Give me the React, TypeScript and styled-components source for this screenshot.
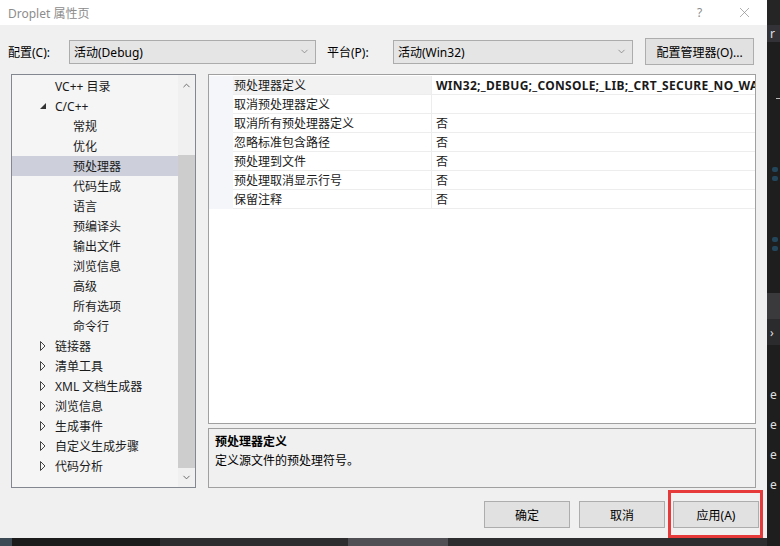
import React from "react";
import styled, { createGlobalStyle } from "styled-components";
import { ChevronDown, ChevronUp, X } from "lucide-react";

const GlobalStyle = createGlobalStyle`
  body {
    margin: 0;
    background: #1e1e1e;
    font-family: "Noto Sans", "Noto Sans CJK SC", sans-serif;
    font-size: 12px;
    color: #000;
  }
`;

const Shell = styled.div`
  display: grid;
  grid-template-columns: 767px 13px;
  grid-template-rows: 538px 8px;
  width: 780px;
  height: 546px;
  overflow: hidden;
`;

const Dialog = styled.div`
  grid-column: 1;
  grid-row: 1;
  display: flex;
  flex-direction: column;
  background: #f0f0f0;
`;

const TitleBar = styled.div`
  height: 25px;
  display: flex;
  align-items: center;
  background: #fff;
  padding-left: 8px;
`;

const Title = styled.span`
  color: #8c8c8c;
  font-size: 12px;
`;

const TitleButtons = styled.div`
  margin-left: auto;
  display: flex;
  height: 100%;
`;

const TitleButton = styled.div`
  width: 45px;
  display: flex;
  align-items: center;
  justify-content: center;
  color: #8c8c8c;
  font-size: 12px;
`;

const ConfigRow = styled.div`
  margin-top: 13px;
  height: 27px;
  display: flex;
  align-items: center;
  padding: 0 13px 0 8px;
`;

const FieldLabel = styled.span<{ $w: number; $ml?: number }>`
  width: ${({ $w }) => $w}px;
  margin-left: ${({ $ml = 0 }) => $ml}px;
  flex-shrink: 0;
`;

const Combo = styled.div<{ $w: number }>`
  width: ${({ $w }) => $w}px;
  height: 24px;
  box-sizing: border-box;
  display: flex;
  align-items: center;
  padding: 0 5px 0 4px;
  background: #e5e5e5;
  border: 1px solid #acacac;
  color: #000;
  & > span {
    flex: 1;
  }
  & > svg {
    color: #707070;
  }
`;

const PushButton = styled.div<{ $w: number }>`
  width: ${({ $w }) => $w}px;
  height: 27px;
  box-sizing: border-box;
  display: flex;
  align-items: center;
  justify-content: center;
  background: #e1e1e1;
  border: 1px solid #adadad;
  flex-shrink: 0;
`;

const ManagerButton = styled(PushButton)`
  margin-left: 12px;
`;

const Main = styled.div`
  margin-top: 9px;
  height: 414px;
  display: flex;
  gap: 12px;
  padding: 0 11px;
`;

const Tree = styled.div`
  width: 185px;
  box-sizing: border-box;
  border: 1px solid #828790;
  background: #f5f5f5;
  display: flex;
`;

const TreeList = styled.div`
  flex: 1;
  padding-top: 1px;
  display: flex;
  flex-direction: column;
`;

const TreeRow = styled.div<{ $level: number; $selected?: boolean }>`
  height: 20px;
  display: flex;
  align-items: center;
  padding-left: ${({ $level }) => ($level === 0 ? 26 : 61)}px;
  background: ${({ $selected }) => ($selected ? "#cdd0da" : "transparent")};
  color: #1a1a1a;
  white-space: nowrap;
`;

const Twisty = styled.span`
  width: 17px;
  display: flex;
  align-items: center;
  padding-left: 2px;
  box-sizing: border-box;
`;

const ScrollBar = styled.div`
  width: 17px;
  background: #f0f0f0;
  display: flex;
  flex-direction: column;
`;

const ScrollArrow = styled.div<{ $h: number }>`
  height: ${({ $h }) => $h}px;
  display: flex;
  align-items: center;
  justify-content: center;
  color: #606060;
`;

const Thumb = styled.div<{ $top: number; $h: number }>`
  margin-top: ${({ $top }) => $top}px;
  height: ${({ $h }) => $h}px;
  background: #cdcdcd;
`;

const Track = styled.div`
  flex: 1;
`;

const RightColumn = styled.div`
  flex: 1;
  display: flex;
  flex-direction: column;
`;

const Grid = styled.div`
  height: 351px;
  box-sizing: border-box;
  border: 1px solid #a0a0a0;
  background: #fff;
  padding-top: 1px;
  overflow: hidden;
`;

const GridRow = styled.div`
  display: grid;
  grid-template-columns: 24px 199px 1fr;
  height: 19px;
`;

const Gutter = styled.div`
  background: #f4f6f9;
`;

const Cell = styled.div<{ $bold?: boolean; $selected?: boolean; $divider?: boolean }>`
  display: flex;
  align-items: center;
  padding-left: ${({ $divider }) => ($divider ? 1 : 4)}px;
  border-bottom: 1px solid #ededed;
  border-right: ${({ $divider }) => ($divider ? "1px solid #ededed" : "none")};
  background: ${({ $selected }) => ($selected ? "#f2f2f2" : "transparent")};
  font-weight: ${({ $bold }) => ($bold ? 700 : 400)};
  letter-spacing: ${({ $bold }) => ($bold ? "0.27px" : "normal")};
  white-space: nowrap;
  overflow: hidden;
  color: #1a1a1a;
`;

const Description = styled.div`
  margin-top: 4px;
  height: 60px;
  box-sizing: border-box;
  border: 1px solid #a0a0a0;
  background: #f0f0f0;
  padding: 3px 6px;
  display: flex;
  flex-direction: column;
  line-height: 19px;
`;

const DescTitle = styled.div`
  font-weight: 700;
`;

const ButtonRow = styled.div`
  margin-top: 13px;
  height: 27px;
  display: flex;
  justify-content: flex-end;
  padding-right: 8px;
  gap: 9px;
`;

const Highlight = styled.div`
  position: relative;
  margin-left: -1px;
  &::after {
    content: "";
    position: absolute;
    left: -5px;
    right: -4px;
    top: -11px;
    bottom: -10px;
    border: 3px solid #e5393a;
    pointer-events: none;
  }
`;

const RightStrip = styled.div`
  grid-column: 2;
  grid-row: 1 / 3;
  background: #1e1e1e;
  display: flex;
  flex-direction: column;
  color: #e0e0e0;
`;

const StripBlock = styled.div<{ $h: number; $bg: string }>`
  height: ${({ $h }) => $h}px;
  background: ${({ $bg }) => $bg};
  display: flex;
  align-items: center;
  padding-left: 3px;
  font-size: 12px;
  flex-shrink: 0;
`;

const StripLine = styled.div`
  margin-left: 9px;
  height: 1px;
  background: #bbb;
  flex-shrink: 0;
`;

const DimMark = styled.div`
  margin: 2px 0 2px 5px;
  width: 6px;
  height: 5px;
  border-radius: 2px;
  background: #23465a;
  flex-shrink: 0;
`;

const BottomStrip = styled.div`
  grid-column: 1;
  grid-row: 2;
  display: flex;
  background: #1b1b1c;
`;

const BottomSeg = styled.div<{ $w: number; $bg: string }>`
  width: ${({ $w }) => $w}px;
  background: ${({ $bg }) => $bg};
  flex-shrink: 0;
`;

const ExpandedIcon = () => (
  <svg width="6" height="6" viewBox="0 0 6 6">
    <polygon points="6,0 6,6 0,6" fill="#333" />
  </svg>
);

const CollapsedIcon = () => (
  <svg width="6" height="10" viewBox="0 0 6 10">
    <polygon points="0.5,0.5 5,5 0.5,9.5" fill="none" stroke="#444" strokeWidth="1" />
  </svg>
);

type TreeItem = { label: string; level: number; twisty?: "open" | "closed"; selected?: boolean };

const treeItems: TreeItem[] = [
  { label: "VC++ 目录", level: 0 },
  { label: "C/C++", level: 0, twisty: "open" },
  { label: "常规", level: 1 },
  { label: "优化", level: 1 },
  { label: "预处理器", level: 1, selected: true },
  { label: "代码生成", level: 1 },
  { label: "语言", level: 1 },
  { label: "预编译头", level: 1 },
  { label: "输出文件", level: 1 },
  { label: "浏览信息", level: 1 },
  { label: "高级", level: 1 },
  { label: "所有选项", level: 1 },
  { label: "命令行", level: 1 },
  { label: "链接器", level: 0, twisty: "closed" },
  { label: "清单工具", level: 0, twisty: "closed" },
  { label: "XML 文档生成器", level: 0, twisty: "closed" },
  { label: "浏览信息", level: 0, twisty: "closed" },
  { label: "生成事件", level: 0, twisty: "closed" },
  { label: "自定义生成步骤", level: 0, twisty: "closed" },
  { label: "代码分析", level: 0, twisty: "closed" },
];

const props: { name: string; value: string; bold?: boolean; selected?: boolean }[] = [
  {
    name: "预处理器定义",
    value: "WIN32;_DEBUG;_CONSOLE;_LIB;_CRT_SECURE_NO_WA",
    bold: true,
    selected: true,
  },
  { name: "取消预处理器定义", value: "" },
  { name: "取消所有预处理器定义", value: "否" },
  { name: "忽略标准包含路径", value: "否" },
  { name: "预处理到文件", value: "否" },
  { name: "预处理取消显示行号", value: "否" },
  { name: "保留注释", value: "否" },
];

export default function App() {
  return (
    <Shell>
      <GlobalStyle />
      <Dialog>
        <TitleBar>
          <Title>Droplet 属性页</Title>
          <TitleButtons>
            <TitleButton>?</TitleButton>
            <TitleButton>
              <X size={17} strokeWidth={1} />
            </TitleButton>
          </TitleButtons>
        </TitleBar>

        <ConfigRow>
          <FieldLabel $w={61}>配置(C):</FieldLabel>
          <Combo $w={247}>
            <span>活动(Debug)</span>
            <ChevronDown size={11} strokeWidth={1.5} />
          </Combo>
          <FieldLabel $w={66} $ml={11}>
            平台(P):
          </FieldLabel>
          <Combo $w={240}>
            <span>活动(Win32)</span>
            <ChevronDown size={11} strokeWidth={1.5} />
          </Combo>
          <ManagerButton $w={109}>配置管理器(O)...</ManagerButton>
        </ConfigRow>

        <Main>
          <Tree>
            <TreeList>
              {treeItems.map((item, i) => (
                <TreeRow key={i} $level={item.level} $selected={item.selected}>
                  {item.level === 0 && (
                    <Twisty>
                      {item.twisty === "open" && <ExpandedIcon />}
                      {item.twisty === "closed" && <CollapsedIcon />}
                    </Twisty>
                  )}
                  {item.label}
                </TreeRow>
              ))}
            </TreeList>
            <ScrollBar>
              <ScrollArrow $h={20}>
                <ChevronUp size={11} strokeWidth={2} />
              </ScrollArrow>
              <Thumb $top={60} $h={313} />
              <Track />
              <ScrollArrow $h={19}>
                <ChevronDown size={11} strokeWidth={2} />
              </ScrollArrow>
            </ScrollBar>
          </Tree>

          <RightColumn>
            <Grid>
              {props.map((p, i) => (
                <GridRow key={i}>
                  <Gutter />
                  <Cell $divider $selected={p.selected}>
                    {p.name}
                  </Cell>
                  <Cell $bold={p.bold}>{p.value}</Cell>
                </GridRow>
              ))}
            </Grid>
            <Description>
              <DescTitle>预处理器定义</DescTitle>
              <div>定义源文件的预处理符号。</div>
            </Description>
          </RightColumn>
        </Main>

        <ButtonRow>
          <PushButton $w={86}>确定</PushButton>
          <PushButton $w={86}>取消</PushButton>
          <Highlight>
            <PushButton $w={86}>应用(A)</PushButton>
          </Highlight>
        </ButtonRow>
      </Dialog>

      <RightStrip>
        <StripBlock $h={25} $bg="#252526" />
        <StripBlock $h={17} $bg="#333337">
          r
        </StripBlock>
        <StripBlock $h={56} $bg="#1e1e1e" />
        <StripLine />
        <StripBlock $h={66} $bg="#1e1e1e" />
        <DimMark />
        <DimMark />
        <StripBlock $h={52} $bg="#1e1e1e" />
        <DimMark />
        <DimMark />
        <StripBlock $h={40} $bg="#1e1e1e" />
        <StripBlock $h={26} $bg="#3a3a3d" />
        <StripBlock $h={26} $bg="#2b2b2e">
          ›
        </StripBlock>
        <StripBlock $h={34} $bg="#1e1e1e" />
        <StripBlock $h={30} $bg="#1e1e1e">e</StripBlock>
        <StripBlock $h={30} $bg="#1e1e1e">e</StripBlock>
        <StripBlock $h={30} $bg="#1e1e1e">e</StripBlock>
        <StripBlock $h={30} $bg="#1e1e1e">e</StripBlock>
      </RightStrip>

      <BottomStrip>
        <BottomSeg $w={12} $bg="#3b4a55" />
        <BottomSeg $w={148} $bg="#1b1b1c" />
        <BottomSeg $w={188} $bg="#2d2d30" />
        <BottomSeg $w={100} $bg="#505054" />
        <BottomSeg $w={319} $bg="#2d2d30" />
      </BottomStrip>
    </Shell>
  );
}
